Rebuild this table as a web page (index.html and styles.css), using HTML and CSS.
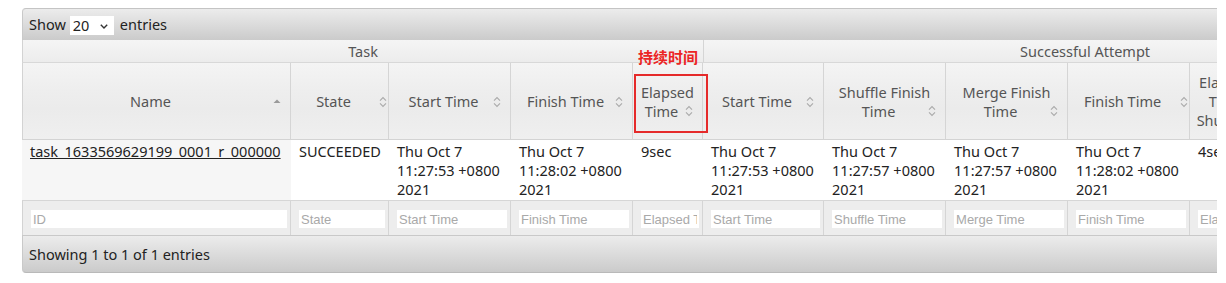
FILE: index.html
```html
<!DOCTYPE html>
<html lang="en">
<head>
<meta charset="utf-8">
<title>Tasks</title>
<link rel="stylesheet" href="styles.css">
</head>
<body>
<div class="page">
  <div class="dt-wrapper">
    <div class="dt-toolbar dt-top">
      <label class="length">Show <span class="select-wrap"><select class="length-select"><option>20</option><option>50</option><option>100</option></select><svg class="chev" width="8" height="5" viewBox="0 0 8 5"><path d="M0.8 0.8 L4 4 L7.2 0.8" fill="none" stroke="#333" stroke-width="1.4"/></svg></span> entries</label>
    </div>
    <div class="dt-scroll">
      <table class="dt">
        <colgroup>
          <col class="c-name"><col class="c-state"><col class="c-w122"><col class="c-w122"><col class="c-w70">
          <col class="c-w121"><col class="c-w122"><col class="c-w122"><col class="c-w122">
          <col class="c-w69"><col class="c-w69"><col class="c-w69"><col class="c-w69">
        </colgroup>
        <thead>
          <tr class="group-row">
            <th class="first" colspan="5">Task</th>
            <th colspan="8">Successful Attempt</th>
          </tr>
          <tr class="head-row">
            <th class="first">Name<span class="sort"><svg width="8" height="12" viewBox="0 0 8 12"><path d="M0.5 7 L4 3.5 L7.5 7 Z" fill="#9a9a9a"/></svg></span></th>
            <th>State<span class="sort far"><svg width="8" height="12" viewBox="0 0 8 12"><path d="M1 4.6 L4 1.6 L7 4.6 M1 7.4 L4 10.4 L7 7.4" fill="none" stroke="#aaa" stroke-width="1.1"/></svg></span></th>
            <th>Start Time<span class="sort"><svg width="8" height="12" viewBox="0 0 8 12"><path d="M1 4.6 L4 1.6 L7 4.6 M1 7.4 L4 10.4 L7 7.4" fill="none" stroke="#aaa" stroke-width="1.1"/></svg></span></th>
            <th>Finish Time<span class="sort"><svg width="8" height="12" viewBox="0 0 8 12"><path d="M1 4.6 L4 1.6 L7 4.6 M1 7.4 L4 10.4 L7 7.4" fill="none" stroke="#aaa" stroke-width="1.1"/></svg></span></th>
            <th>Elapsed Time<span class="sort"><svg width="8" height="12" viewBox="0 0 8 12"><path d="M1 4.6 L4 1.6 L7 4.6 M1 7.4 L4 10.4 L7 7.4" fill="none" stroke="#aaa" stroke-width="1.1"/></svg></span></th>
            <th>Start Time<span class="sort"><svg width="8" height="12" viewBox="0 0 8 12"><path d="M1 4.6 L4 1.6 L7 4.6 M1 7.4 L4 10.4 L7 7.4" fill="none" stroke="#aaa" stroke-width="1.1"/></svg></span></th>
            <th>Shuffle Finish Time<span class="sort"><svg width="8" height="12" viewBox="0 0 8 12"><path d="M1 4.6 L4 1.6 L7 4.6 M1 7.4 L4 10.4 L7 7.4" fill="none" stroke="#aaa" stroke-width="1.1"/></svg></span></th>
            <th>Merge Finish Time<span class="sort"><svg width="8" height="12" viewBox="0 0 8 12"><path d="M1 4.6 L4 1.6 L7 4.6 M1 7.4 L4 10.4 L7 7.4" fill="none" stroke="#aaa" stroke-width="1.1"/></svg></span></th>
            <th>Finish Time<span class="sort far"><svg width="8" height="12" viewBox="0 0 8 12"><path d="M1 4.6 L4 1.6 L7 4.6 M1 7.4 L4 10.4 L7 7.4" fill="none" stroke="#aaa" stroke-width="1.1"/></svg></span></th>
            <th class="tight">Elapsed Time Shuffle<span class="sort"><svg width="8" height="12" viewBox="0 0 8 12"><path d="M1 4.6 L4 1.6 L7 4.6 M1 7.4 L4 10.4 L7 7.4" fill="none" stroke="#aaa" stroke-width="1.1"/></svg></span></th>
            <th class="tight">Elapsed Time Merge<span class="sort"><svg width="8" height="12" viewBox="0 0 8 12"><path d="M1 4.6 L4 1.6 L7 4.6 M1 7.4 L4 10.4 L7 7.4" fill="none" stroke="#aaa" stroke-width="1.1"/></svg></span></th>
            <th class="tight">Elapsed Time Reduce<span class="sort"><svg width="8" height="12" viewBox="0 0 8 12"><path d="M1 4.6 L4 1.6 L7 4.6 M1 7.4 L4 10.4 L7 7.4" fill="none" stroke="#aaa" stroke-width="1.1"/></svg></span></th>
            <th class="tight">Elapsed Time<span class="sort"><svg width="8" height="12" viewBox="0 0 8 12"><path d="M1 4.6 L4 1.6 L7 4.6 M1 7.4 L4 10.4 L7 7.4" fill="none" stroke="#aaa" stroke-width="1.1"/></svg></span></th>
          </tr>
        </thead>
        <tbody>
          <tr class="data-row">
            <td class="sorted"><a href="#">task_1633569629199_0001_r_000000</a></td>
            <td>SUCCEEDED</td>
            <td>Thu Oct 7 11:27:53 +0800 2021</td>
            <td>Thu Oct 7 11:28:02 +0800 2021</td>
            <td>9sec</td>
            <td>Thu Oct 7 11:27:53 +0800 2021</td>
            <td>Thu Oct 7 11:27:57 +0800 2021</td>
            <td>Thu Oct 7 11:27:57 +0800 2021</td>
            <td>Thu Oct 7 11:28:02 +0800 2021</td>
            <td>4sec</td>
            <td>0sec</td>
            <td>5sec</td>
            <td>9sec</td>
          </tr>
        </tbody>
        <tfoot>
          <tr class="filter-row">
            <th class="first"><input type="text" placeholder="ID"></th>
            <th><input type="text" placeholder="State"></th>
            <th><input type="text" placeholder="Start Time"></th>
            <th><input type="text" placeholder="Finish Time"></th>
            <th><input type="text" placeholder="Elapsed Time"></th>
            <th><input type="text" placeholder="Start Time"></th>
            <th><input type="text" placeholder="Shuffle Time"></th>
            <th><input type="text" placeholder="Merge Time"></th>
            <th><input type="text" placeholder="Finish Time"></th>
            <th><input type="text" placeholder="Elapsed Shuffle Time"></th>
            <th><input type="text" placeholder="Elapsed Merge Time"></th>
            <th><input type="text" placeholder="Elapsed Reduce Time"></th>
            <th><input type="text" placeholder="Elapsed Time"></th>
          </tr>
        </tfoot>
      </table>
    </div>
    <div class="dt-toolbar dt-bottom">
      <div class="info">Showing 1 to 1 of 1 entries</div>
    </div>
  </div>
  <div class="note-label">持续时间</div>
  <div class="note-box"></div>
</div>
</body>
</html>
```
FILE: styles.css
```css
html, body {
  margin: 0;
  padding: 0;
  background: #ffffff;
}
body {
  font-family: "Noto Sans", "Open Sans", "Noto Sans CJK SC", sans-serif;
  font-size: 14.5px;
  color: #222;
}
.page {
  position: relative;
  padding: 8px 0 0 22px;
}
.dt-wrapper {
  width: 1195px;
}
.dt-toolbar {
  background: linear-gradient(#ececec, #cbcbcb);
  color: #222;
  font-size: 14.5px;
  line-height: 19px;
}
.dt-top {
  height: 31px;
  border-top: 1px solid #c4c4c4;
  border-left: 1px solid #c9c9c9;
  border-top-left-radius: 4px;
  padding: 0 0 0 6px;
  display: flex;
  align-items: center;
}
.length {
  display: flex;
  align-items: center;
  gap: 4px;
}
.select-wrap {
  position: relative;
  display: inline-block;
  margin-right: 2px;
}
.length-select {
  appearance: none;
  -webkit-appearance: none;
  border: none;
  outline: none;
  background: #fff;
  font-family: "Noto Sans", sans-serif;
  font-size: 14.5px;
  color: #222;
  width: 44px;
  height: 19px;
  line-height: 19px;
  padding: 0 0 0 3px;
  margin: 1px 0 0 0;
  display: block;
}
.chev {
  position: absolute;
  right: 6px;
  top: 9px;
  pointer-events: none;
}
.dt-scroll {
  overflow: hidden;
  width: 1195px;
}
.dt {
  table-layout: fixed;
  width: 1443px;
  border-collapse: separate;
  border-spacing: 0;
}
.c-name { width: 269px; }
.c-state { width: 98px; }
.c-w122 { width: 122px; }
.c-w121 { width: 121px; }
.c-w70 { width: 70px; }
.c-w69 { width: 69px; }

thead th {
  font-weight: normal;
  color: #555;
  line-height: 19px;
  text-align: center;
  border-right: 1px solid #d5d5d5;
  border-bottom: 1px solid #d8d8d8;
  background: linear-gradient(#f4f4f4 0%, #eeeeee 35%, #ebebeb 60%, #efefef 100%);
}
thead th.first { border-left: 1px solid #d3d3d3; }
.group-row th {
  padding: 2px 7px 1px;
  border-right: none;
  background: linear-gradient(#f5f5f5, #ececec);
}
.group-row th + th { border-left: 1px solid #d5d5d5; }
.head-row th {
  padding: 10px 7px 9px;
  vertical-align: middle;
  border-bottom-color: #d3d3d3;
}
.head-row th.tight {
  padding-left: 3px;
  padding-right: 0;
}
.sort {
  float: right;
  width: 12px;
  height: 19px;
  display: flex;
  align-items: center;
  justify-content: center;
}
.sort.far {
  margin-left: 8px;
  margin-right: -8px;
}
.tight .sort {
  width: 10px;
}
.sort svg { display: block; }

.data-row td {
  padding: 2px 7px 1px 8px;
  line-height: 19px;
  vertical-align: top;
  color: #222;
  background: #fff;
}
.data-row td.sorted { background: #f6f6f6; }
.data-row a {
  color: #222;
  text-decoration: underline;
}

.filter-row th {
  font-weight: normal;
  padding: 9px 3px 7px 8px;
  background: #ededed;
  border-top: 1px solid #d6d6d6;
  border-right: 1px solid #d5d5d5;
}
.filter-row th.first {
  border-left: 1px solid #d3d3d3;
  padding-left: 8px;
}
.filter-row input {
  display: block;
  box-sizing: border-box;
  width: 100%;
  height: 18px;
  border: none;
  outline: none;
  background: #fff;
  padding: 0 2px;
  font-family: "Liberation Sans", Arial, sans-serif;
  font-size: 13px;
  color: #333;
}
.filter-row input::placeholder { color: #a9a9a9; }

.dt-bottom {
  height: 36px;
  border-top: 1px solid #c9c9c9;
  border-left: 1px solid #c9c9c9;
  border-bottom: 1px solid #b9b9b9;
  border-bottom-left-radius: 4px;
  padding: 0 0 0 6px;
  display: flex;
  align-items: center;
}
.info { color: #222; }

.note-label {
  position: absolute;
  left: 638px;
  top: 49px;
  font-family: "Noto Sans CJK SC", sans-serif;
  font-weight: bold;
  font-size: 15px;
  line-height: 16px;
  color: #ec2424;
}
.note-box {
  position: absolute;
  left: 634px;
  top: 74px;
  width: 70px;
  height: 55px;
  border: 2px solid #e52a2a;
}
```
